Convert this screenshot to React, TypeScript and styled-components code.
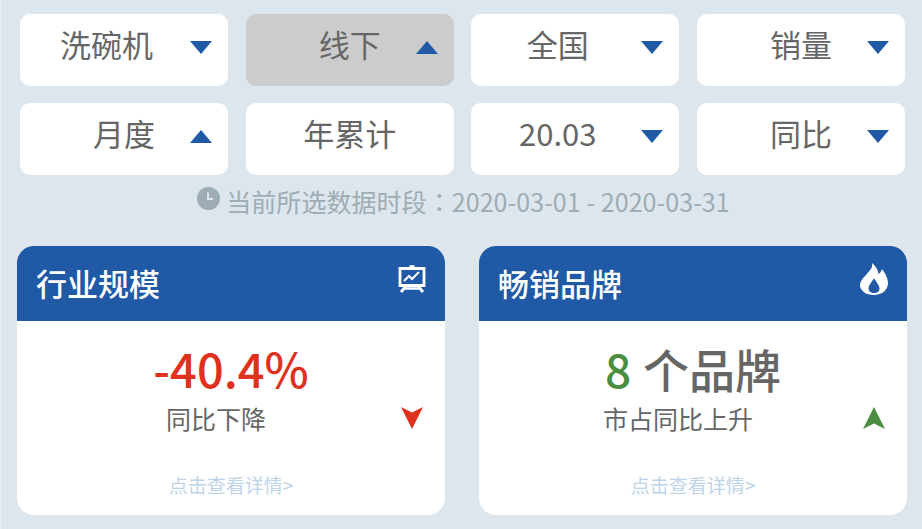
import React from "react";
import styled, { createGlobalStyle } from "styled-components";

const GlobalStyle = createGlobalStyle`
  html, body {
    margin: 0;
    padding: 0;
    background: #dde6ed;
    font-family: "Noto Sans CJK SC", "Noto Sans", sans-serif;
  }
`;

const Page = styled.div`
  width: 922px;
  height: 529px;
  overflow: hidden;
  box-sizing: border-box;
  padding: 14px 15px 0 16px;
  border-left: 1px solid #e9eff4;
`;

const FilterGrid = styled.div`
  display: grid;
  grid-template-columns: repeat(4, 208px);
  grid-auto-rows: 72px;
  column-gap: 17.67px;
  row-gap: 17px;
  padding-left: 3px;
`;

const FilterButton = styled.div<{ $active?: boolean; $shift?: boolean }>`
  position: relative;
  display: flex;
  align-items: center;
  justify-content: center;
  box-sizing: border-box;
  padding-bottom: 12px;
  padding-right: ${(props) => (props.$shift ? "35px" : "0")};
  border-radius: 10px;
  background: ${(props) => (props.$active ? "#cccccc" : "#ffffff")};
  color: #666666;
  font-size: 31px;
  line-height: 40px;
`;

const Caret = styled.span<{ $up?: boolean }>`
  position: absolute;
  top: 27px;
  right: 16px;
  width: 0;
  height: 0;
  border-left: 11px solid transparent;
  border-right: 11px solid transparent;
  border-${(props) => (props.$up ? "bottom" : "top")}: 13px solid #2059a5;
`;

const Period = styled.div`
  display: flex;
  align-items: center;
  justify-content: center;
  gap: 6px;
  height: 32px;
  margin-top: 10px;
  padding-left: 3px;
  color: #9dacb5;
  font-size: 25px;
  line-height: 32px;
  letter-spacing: 0.06px;
`;

const PeriodColon = styled.span`
  font-family: "Noto Sans CJK TC", sans-serif;
`;

const ClockIcon = styled.svg`
  width: 23px;
  height: 23px;
  margin-top: -6px;
`;

const Cards = styled.div`
  display: grid;
  grid-template-columns: 428px 428px;
  column-gap: 34px;
  margin-top: 29px;
`;

const Card = styled.div`
  position: relative;
  display: flex;
  flex-direction: column;
  height: 269px;
  border-radius: 17px;
  overflow: hidden;
  background: #ffffff;
`;

const CardHeader = styled.div`
  display: flex;
  justify-content: space-between;
  height: 75px;
  box-sizing: border-box;
  padding: 15px 18px 0 19px;
  background: #2059a5;
  color: #ffffff;
`;

const CardTitle = styled.div`
  font-size: 31px;
  line-height: 44px;
  font-weight: 500;
`;

const HeaderIcon = styled.svg`
  width: 30px;
  height: 30px;
  margin-top: 3px;
`;

const FireIcon = styled.svg`
  width: 28px;
  height: 32px;
  margin-top: 2px;
  margin-right: 1px;
`;

const CardBody = styled.div`
  display: flex;
  flex-direction: column;
  align-items: center;
  flex: 1;
  padding-top: 15px;
`;

const Figure = styled.div`
  display: flex;
  align-items: baseline;
  height: 64px;
  font-size: 46px;
  line-height: 64px;
  font-weight: 500;
  color: #666666;
`;

const FigureValue = styled.span<{ $color: string; $large?: boolean }>`
  color: ${(props) => props.$color};
  font-size: ${(props) => (props.$large ? "47px" : "46px")};
  margin-right: ${(props) => (props.$large ? "0" : "12px")};
`;

const SubLabel = styled.div`
  margin-top: 1px;
  margin-right: 30px;
  color: #666666;
  font-size: 25px;
  line-height: 34px;
`;

const DetailLink = styled.div`
  margin-top: auto;
  margin-bottom: 16px;
  color: #bdd4ea;
  font-size: 19px;
  line-height: 28px;
`;

const Trend = styled.svg`
  position: absolute;
  right: 22px;
  top: 161px;
  width: 22px;
  height: 22px;
`;

const ChartBoard = () => (
  <HeaderIcon viewBox="0 0 30 30" fill="none" stroke="#ffffff">
    <path d="M3 4.5h24v17H3z" strokeWidth="2.8" />
    <path d="M12.5 3h5" strokeWidth="3.6" />
    <path d="M7 17l5-5 3 3 7-7" strokeWidth="2" />
    <path d="M10 21l-6 7M20 21l6 7" strokeWidth="2.8" />
    <path d="M8 24.5h14" strokeWidth="2.4" />
  </HeaderIcon>
);

const Flame = () => (
  <FireIcon viewBox="0 0 28 32">
    <path
      fill="#ffffff"
      fillRule="evenodd"
      d="M12 0C13 5 10 7 6 12C2 16 0 19 0 22C0 28 6 32 14 32C22 32 28 27 28 20C28 15 25 10 22 6C21 9 20 10 18.5 11C18 7 16 3 12 0ZM14 15C12 19 8.5 22 8.5 25.5C8.5 28.5 11 30 14 30C17 30 19.5 28.5 19.5 25.5C19.5 22 16 19 14 15Z"
    />
  </FireIcon>
);

export default function App() {
  return (
    <Page>
      <GlobalStyle />
      <FilterGrid>
        <FilterButton $shift>
          洗碗机
          <Caret />
        </FilterButton>
        <FilterButton $active>
          线下
          <Caret $up />
        </FilterButton>
        <FilterButton $shift>
          全国
          <Caret />
        </FilterButton>
        <FilterButton>
          销量
          <Caret />
        </FilterButton>
        <FilterButton>
          月度
          <Caret $up />
        </FilterButton>
        <FilterButton>年累计</FilterButton>
        <FilterButton $shift>
          20.03
          <Caret />
        </FilterButton>
        <FilterButton>
          同比
          <Caret />
        </FilterButton>
      </FilterGrid>
      <Period>
        <ClockIcon viewBox="0 0 23 23">
          <circle cx="11.5" cy="11.5" r="11.5" fill="#9dacb5" />
          <path d="M11 5.5v6.5h5" fill="none" stroke="#dde6ed" strokeWidth="2" />
        </ClockIcon>
        <span>
          当前所选数据时段<PeriodColon>：</PeriodColon>2020-03-01 - 2020-03-31
        </span>
      </Period>
      <Cards>
        <Card>
          <CardHeader>
            <CardTitle>行业规模</CardTitle>
            <ChartBoard />
          </CardHeader>
          <CardBody>
            <Figure>
              <FigureValue $color="#e0301e" $large>
                -40.4%
              </FigureValue>
            </Figure>
            <SubLabel>同比下降</SubLabel>
            <DetailLink>点击查看详情&gt;</DetailLink>
          </CardBody>
          <Trend viewBox="0 0 24 24">
            <path d="M0 0l12 6 12-6-12 24z" fill="#e0301e" />
          </Trend>
        </Card>
        <Card>
          <CardHeader>
            <CardTitle>畅销品牌</CardTitle>
            <Flame />
          </CardHeader>
          <CardBody>
            <Figure>
              <FigureValue $color="#4a8f3f">8</FigureValue>个品牌
            </Figure>
            <SubLabel>市占同比上升</SubLabel>
            <DetailLink>点击查看详情&gt;</DetailLink>
          </CardBody>
          <Trend viewBox="0 0 24 24">
            <path d="M12 0l12 24-12-6-12 6z" fill="#4a8f3f" />
          </Trend>
        </Card>
      </Cards>
    </Page>
  );
}
